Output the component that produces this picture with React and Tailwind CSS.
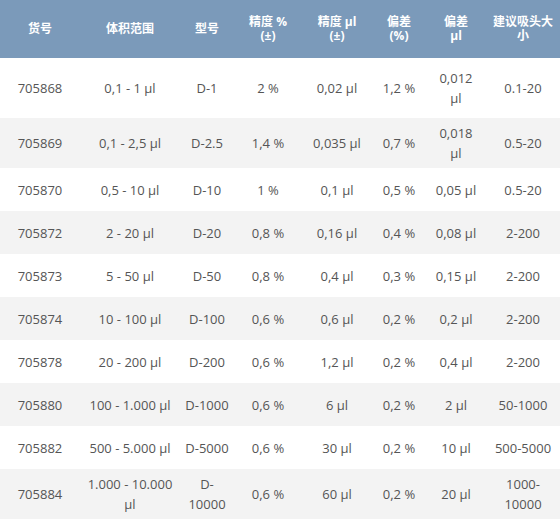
import React from 'react';

const headers = ['货号', '体积范围', '型号', '精度 %\n(±)', '精度 µl\n(±)', '偏差\n(%)', '偏差\nµl', '建议吸头大\n小'];

const widths = ['w-[80px]', 'w-[100px]', 'w-[54px]', 'w-[68px]', 'w-[70px]', 'w-[54px]', 'w-[60px]', 'w-[74px]'];

const rows = [
  { h: 'h-[60px]', cells: ['705868', '0,1 - 1 µl', 'D-1', '2 %', '0,02 µl', '1,2 %', '0,012\nµl', '0.1-20'] },
  { h: 'h-[50px]', cells: ['705869', '0,1 - 2,5 µl', 'D-2.5', '1,4 %', '0,035 µl', '0,7 %', '0,018\nµl', '0.5-20'] },
  { h: 'h-[43px]', cells: ['705870', '0,5 - 10 µl', 'D-10', '1 %', '0,1 µl', '0,5 %', '0,05 µl', '0.5-20'] },
  { h: 'h-[43px]', cells: ['705872', '2 - 20 µl', 'D-20', '0,8 %', '0,16 µl', '0,4 %', '0,08 µl', '2-200'] },
  { h: 'h-[43px]', cells: ['705873', '5 - 50 µl', 'D-50', '0,8 %', '0,4 µl', '0,3 %', '0,15 µl', '2-200'] },
  { h: 'h-[43px]', cells: ['705874', '10 - 100 µl', 'D-100', '0,6 %', '0,6 µl', '0,2 %', '0,2 µl', '2-200'] },
  { h: 'h-[43px]', cells: ['705878', '20 - 200 µl', 'D-200', '0,6 %', '1,2 µl', '0,2 %', '0,4 µl', '2-200'] },
  { h: 'h-[43px]', cells: ['705880', '100 - 1.000 µl', 'D-1000', '0,6 %', '6 µl', '0,2 %', '2 µl', '50-1000'] },
  { h: 'h-[43px]', cells: ['705882', '500 - 5.000 µl', 'D-5000', '0,6 %', '30 µl', '0,2 %', '10 µl', '500-5000'] },
  { h: 'h-[50px]', cells: ['705884', '1.000 - 10.000\nµl', 'D-\n10000', '0,6 %', '60 µl', '0,2 %', '20 µl', '1000-\n10000'] },
];

export default function App() {
  return (
    <div className="w-[560px] h-[522px] bg-white font-['Open_Sans','Noto_Sans_CJK_SC',sans-serif]">
      <table className="w-[560px] table-fixed border-collapse">
        <thead>
          <tr className="h-[58px] bg-[#7b9aba] text-white text-[12px] font-bold leading-[14px]">
            {headers.map((h, i) => (
              <th key={i} className={`${widths[i]} px-[4px] text-center align-middle whitespace-pre-line`}>
                {h}
              </th>
            ))}
          </tr>
        </thead>
        <tbody>
          {rows.map((row, r) => (
            <tr key={r} className={`${row.h} ${r % 2 === 1 ? 'bg-[#f3f3f3]' : 'bg-white'} text-[13px] leading-[20px] text-[#555555]`}>
              {row.cells.map((c, i) => (
                <td key={i} className="px-[2px] text-center align-middle whitespace-pre-line">
                  {c}
                </td>
              ))}
            </tr>
          ))}
        </tbody>
      </table>
    </div>
  );
}
